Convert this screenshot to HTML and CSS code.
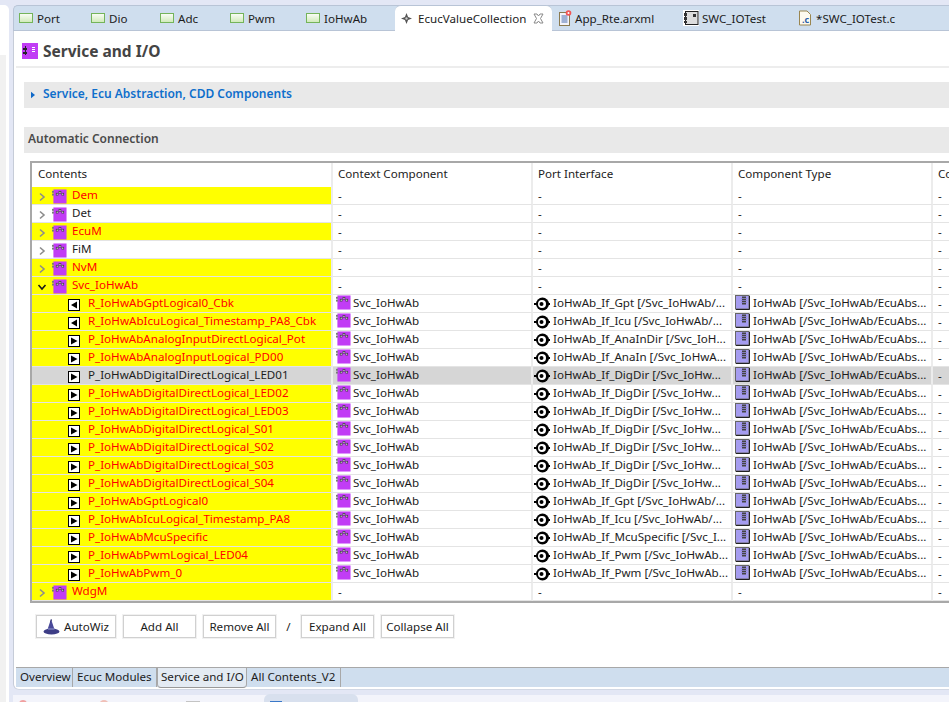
FILE: index.html
```html
<!DOCTYPE html>
<html>
<head>
<meta charset="utf-8">
<title>Service and I/O</title>
<link rel="stylesheet" href="styles.css">
</head>
<body>
<svg class="defs" width="0" height="0">
  <defs>
    <symbol id="comp" viewBox="0 0 16 16">
      <rect x="1.500" y="0.500" width="14" height="15" fill="#c13cf5"/>
      <rect x="0" y="2" width="2" height="2" fill="#777"/><rect x="0" y="5" width="2" height="2" fill="#777"/>
      <rect x="4.500" y="4.500" width="2" height="2" fill="#fff" stroke="#333" stroke-width="0.700"/>
      <rect x="7.500" y="2.500" width="2" height="2" fill="#fff" stroke="#333" stroke-width="0.700"/>
      <rect x="10.500" y="4.500" width="2" height="2" fill="#fff" stroke="#333" stroke-width="0.700"/>
    </symbol>
    <symbol id="portr" viewBox="0 0 12 12">
      <rect x="0.500" y="0.500" width="11" height="11" fill="#fff" stroke="#000"/>
      <path d="M9 2.500V9.500L3 6Z" fill="#000"/>
    </symbol>
    <symbol id="portp" viewBox="0 0 12 12">
      <rect x="0.500" y="0.500" width="11" height="11" fill="#fff" stroke="#000"/>
      <path d="M3 2.500V9.500L9.500 6Z" fill="#000"/>
    </symbol>
    <symbol id="iface" viewBox="0 0 16 14">
      <path d="M0 7H4M13 7H16" stroke="#000" stroke-width="2"/>
      <circle cx="8.500" cy="7" r="6.500" fill="#000"/>
      <circle cx="8" cy="7" r="4" fill="#fff"/>
      <circle cx="7.500" cy="7" r="2" fill="#000"/>
    </symbol>
    <symbol id="ctype" viewBox="0 0 15 15">
      <rect x="0.500" y="0.500" width="13.500" height="13.500" fill="#a59cf0" stroke="#666"/>
      <path d="M14.500 1V14.500H1" fill="none" stroke="#222"/>
      <rect x="7" y="1.500" width="4" height="8" fill="#444"/>
      <path d="M6 3.500H12M6 5.500H12M6 7.500H12" stroke="#8f86d8" stroke-width="0.800"/>
    </symbol>
    <symbol id="chev" viewBox="0 0 8 10">
      <path d="M2 1.500L6 5L2 8.500" fill="none" stroke="#8c8c8c" stroke-width="1.600"/>
    </symbol>
    <symbol id="chevd" viewBox="0 0 10 8">
      <path d="M1.500 2L5 6L8.500 2" fill="none" stroke="#1a1a1a" stroke-width="1.600"/>
    </symbol>
    <symbol id="ed" viewBox="0 0 14 10">
      <defs><linearGradient id="edg" x1="0" y1="0" x2="0" y2="1"><stop offset="0" stop-color="#fbfdf8"/><stop offset="1" stop-color="#cfeab8"/></linearGradient></defs>
      <rect x="0.500" y="0.500" width="13" height="9" fill="url(#edg)" stroke="#74b45a"/>
    </symbol>
  </defs>
</svg>
<div class="window">
  <div class="side"><div class="side-in"></div></div>
  <div class="editor">
    <div class="tabs">
      <div class="tab t-port"><svg class="ti"><use href="#ed"/></svg>Port</div>
      <div class="tab t-dio"><svg class="ti"><use href="#ed"/></svg>Dio</div>
      <div class="tab t-adc"><svg class="ti"><use href="#ed"/></svg>Adc</div>
      <div class="tab t-pwm"><svg class="ti"><use href="#ed"/></svg>Pwm</div>
      <div class="tab t-io"><svg class="ti"><use href="#ed"/></svg>IoHwAb</div>
      <div class="tab active">
        <svg class="star" viewBox="0 0 14 14"><path d="M7 0L9 5L14 7L9 9L7 14L5 9L0 7L5 5Z" fill="#555"/><circle cx="7" cy="7" r="1.500" fill="#ccc"/></svg>
        <span>EcucValueCollection</span>
        <svg class="close" viewBox="0 0 11 11"><path d="M1 1L4 1L5.500 3L7 1L10 1L7.500 5.500L10 10L7 10L5.500 8L4 10L1 10L3.500 5.500Z" fill="#fff" stroke="#8a8a8a"/></svg>
      </div>
      <div class="tab t-rte">
        <svg class="ti2" viewBox="0 0 13 16"><rect x="0.500" y="2.500" width="10" height="13" fill="#f4f4fa" stroke="#8a7a50"/><path d="M2.500 6H8.500M2.500 8H8.500M2.500 10H8.500M2.500 12H8.500" stroke="#4a6fb0"/><circle cx="9.500" cy="3" r="2.800" fill="#f25555"/><circle cx="9.500" cy="3" r="1" fill="#fff"/></svg>
        App_Rte.arxml
      </div>
      <div class="tab t-swc">
        <svg class="ti2" viewBox="0 0 16 16"><rect width="16" height="16" fill="#fff"/><rect x="2.500" y="1.500" width="12.500" height="13" fill="#ddd" stroke="#222"/><rect x="1" y="3" width="3" height="3" fill="#333"/><rect x="1" y="7" width="3" height="3" fill="#333"/><rect x="1" y="11" width="3" height="2" fill="#333"/><rect x="10" y="4" width="3" height="3" fill="#333"/></svg>
        SWC_IOTest
      </div>
      <div class="tab t-c">
        <svg class="ti2" viewBox="0 0 12 15"><path d="M0.500 0.500H8L11.500 4V14.500H0.500Z" fill="#fdfaf0" stroke="#9a8650"/><text x="3" y="12" class="cglyph">.c</text></svg>
        *SWC_IOTest.c
      </div>
    </div>

    <div class="page">
      <header class="head">
        <svg class="hicon" viewBox="0 0 16 16"><rect width="16" height="16" fill="#c13cf5"/><rect x="1" y="5" width="4" height="2" fill="#222"/><rect x="1" y="9" width="4" height="2" fill="#222"/><rect x="3" y="3" width="1" height="9" fill="#222"/><rect x="10" y="4" width="3" height="1" fill="#fff"/><rect x="10" y="6" width="3" height="1" fill="#fff"/><rect x="10" y="8" width="3" height="1" fill="#fff"/></svg>
        <h1>Service and I/O</h1>
      </header>

      <section class="bar bar-service">
        <svg class="tw" viewBox="0 0 5 8"><path d="M0 0L5 4L0 8Z" fill="#1069c8"/></svg>
        <span>Service, Ecu Abstraction, CDD Components</span>
      </section>

      <section class="bar bar-auto"><span>Automatic Connection</span></section>

      <div class="tree">
        <table>
          <colgroup><col class="c1"><col class="c2"><col class="c3"><col class="c4"><col class="c5"></colgroup>
          <thead><tr><th>Contents</th><th>Context Component</th><th>Port Interface</th><th>Component Type</th><th>Co</th></tr></thead>
          <tbody>
            <tr class="mark"><td><div class="cell lvl0"><svg class="chev"><use href="#chev"/></svg><svg class="ic16"><use href="#comp"/></svg><span>Dem</span></div></td><td>-</td><td>-</td><td>-</td><td>-</td></tr>
            <tr><td><div class="cell lvl0"><svg class="chev"><use href="#chev"/></svg><svg class="ic16"><use href="#comp"/></svg><span>Det</span></div></td><td>-</td><td>-</td><td>-</td><td>-</td></tr>
            <tr class="mark"><td><div class="cell lvl0"><svg class="chev"><use href="#chev"/></svg><svg class="ic16"><use href="#comp"/></svg><span>EcuM</span></div></td><td>-</td><td>-</td><td>-</td><td>-</td></tr>
            <tr><td><div class="cell lvl0"><svg class="chev"><use href="#chev"/></svg><svg class="ic16"><use href="#comp"/></svg><span>FiM</span></div></td><td>-</td><td>-</td><td>-</td><td>-</td></tr>
            <tr class="mark"><td><div class="cell lvl0"><svg class="chev"><use href="#chev"/></svg><svg class="ic16"><use href="#comp"/></svg><span>NvM</span></div></td><td>-</td><td>-</td><td>-</td><td>-</td></tr>
            <tr class="mark"><td><div class="cell lvl0"><svg class="chevd"><use href="#chevd"/></svg><svg class="ic16"><use href="#comp"/></svg><span>Svc_IoHwAb</span></div></td><td>-</td><td>-</td><td>-</td><td>-</td></tr>
            <tr class="mark"><td><div class="cell lvl1"><svg class="ic12"><use href="#portr"/></svg><span>R_IoHwAbGptLogical0_Cbk</span></div></td><td><div class="cell ctx"><svg class="icc"><use href="#comp"/></svg><span>Svc_IoHwAb</span></div></td><td><div class="cell pif"><svg class="icif"><use href="#iface"/></svg><span>IoHwAb_If_Gpt [/Svc_IoHwAb/...</span></div></td><td><div class="cell cty"><svg class="icty"><use href="#ctype"/></svg><span>IoHwAb [/Svc_IoHwAb/EcuAbs...</span></div></td><td>-</td></tr>
            <tr class="mark"><td><div class="cell lvl1"><svg class="ic12"><use href="#portr"/></svg><span>R_IoHwAbIcuLogical_Timestamp_PA8_Cbk</span></div></td><td><div class="cell ctx"><svg class="icc"><use href="#comp"/></svg><span>Svc_IoHwAb</span></div></td><td><div class="cell pif"><svg class="icif"><use href="#iface"/></svg><span>IoHwAb_If_Icu [/Svc_IoHwAb/...</span></div></td><td><div class="cell cty"><svg class="icty"><use href="#ctype"/></svg><span>IoHwAb [/Svc_IoHwAb/EcuAbs...</span></div></td><td>-</td></tr>
            <tr class="mark"><td><div class="cell lvl1"><svg class="ic12"><use href="#portp"/></svg><span>P_IoHwAbAnalogInputDirectLogical_Pot</span></div></td><td><div class="cell ctx"><svg class="icc"><use href="#comp"/></svg><span>Svc_IoHwAb</span></div></td><td><div class="cell pif"><svg class="icif"><use href="#iface"/></svg><span>IoHwAb_If_AnaInDir [/Svc_IoH...</span></div></td><td><div class="cell cty"><svg class="icty"><use href="#ctype"/></svg><span>IoHwAb [/Svc_IoHwAb/EcuAbs...</span></div></td><td>-</td></tr>
            <tr class="mark"><td><div class="cell lvl1"><svg class="ic12"><use href="#portp"/></svg><span>P_IoHwAbAnalogInputLogical_PD00</span></div></td><td><div class="cell ctx"><svg class="icc"><use href="#comp"/></svg><span>Svc_IoHwAb</span></div></td><td><div class="cell pif"><svg class="icif"><use href="#iface"/></svg><span>IoHwAb_If_AnaIn [/Svc_IoHwA...</span></div></td><td><div class="cell cty"><svg class="icty"><use href="#ctype"/></svg><span>IoHwAb [/Svc_IoHwAb/EcuAbs...</span></div></td><td>-</td></tr>
            <tr class="selrow"><td><div class="cell lvl1"><svg class="ic12"><use href="#portp"/></svg><span>P_IoHwAbDigitalDirectLogical_LED01</span></div></td><td><div class="cell ctx"><svg class="icc"><use href="#comp"/></svg><span>Svc_IoHwAb</span></div></td><td><div class="cell pif"><svg class="icif"><use href="#iface"/></svg><span>IoHwAb_If_DigDir [/Svc_IoHw...</span></div></td><td><div class="cell cty"><svg class="icty"><use href="#ctype"/></svg><span>IoHwAb [/Svc_IoHwAb/EcuAbs...</span></div></td><td>-</td></tr>
            <tr class="mark"><td><div class="cell lvl1"><svg class="ic12"><use href="#portp"/></svg><span>P_IoHwAbDigitalDirectLogical_LED02</span></div></td><td><div class="cell ctx"><svg class="icc"><use href="#comp"/></svg><span>Svc_IoHwAb</span></div></td><td><div class="cell pif"><svg class="icif"><use href="#iface"/></svg><span>IoHwAb_If_DigDir [/Svc_IoHw...</span></div></td><td><div class="cell cty"><svg class="icty"><use href="#ctype"/></svg><span>IoHwAb [/Svc_IoHwAb/EcuAbs...</span></div></td><td>-</td></tr>
            <tr class="mark"><td><div class="cell lvl1"><svg class="ic12"><use href="#portp"/></svg><span>P_IoHwAbDigitalDirectLogical_LED03</span></div></td><td><div class="cell ctx"><svg class="icc"><use href="#comp"/></svg><span>Svc_IoHwAb</span></div></td><td><div class="cell pif"><svg class="icif"><use href="#iface"/></svg><span>IoHwAb_If_DigDir [/Svc_IoHw...</span></div></td><td><div class="cell cty"><svg class="icty"><use href="#ctype"/></svg><span>IoHwAb [/Svc_IoHwAb/EcuAbs...</span></div></td><td>-</td></tr>
            <tr class="mark"><td><div class="cell lvl1"><svg class="ic12"><use href="#portp"/></svg><span>P_IoHwAbDigitalDirectLogical_S01</span></div></td><td><div class="cell ctx"><svg class="icc"><use href="#comp"/></svg><span>Svc_IoHwAb</span></div></td><td><div class="cell pif"><svg class="icif"><use href="#iface"/></svg><span>IoHwAb_If_DigDir [/Svc_IoHw...</span></div></td><td><div class="cell cty"><svg class="icty"><use href="#ctype"/></svg><span>IoHwAb [/Svc_IoHwAb/EcuAbs...</span></div></td><td>-</td></tr>
            <tr class="mark"><td><div class="cell lvl1"><svg class="ic12"><use href="#portp"/></svg><span>P_IoHwAbDigitalDirectLogical_S02</span></div></td><td><div class="cell ctx"><svg class="icc"><use href="#comp"/></svg><span>Svc_IoHwAb</span></div></td><td><div class="cell pif"><svg class="icif"><use href="#iface"/></svg><span>IoHwAb_If_DigDir [/Svc_IoHw...</span></div></td><td><div class="cell cty"><svg class="icty"><use href="#ctype"/></svg><span>IoHwAb [/Svc_IoHwAb/EcuAbs...</span></div></td><td>-</td></tr>
            <tr class="mark"><td><div class="cell lvl1"><svg class="ic12"><use href="#portp"/></svg><span>P_IoHwAbDigitalDirectLogical_S03</span></div></td><td><div class="cell ctx"><svg class="icc"><use href="#comp"/></svg><span>Svc_IoHwAb</span></div></td><td><div class="cell pif"><svg class="icif"><use href="#iface"/></svg><span>IoHwAb_If_DigDir [/Svc_IoHw...</span></div></td><td><div class="cell cty"><svg class="icty"><use href="#ctype"/></svg><span>IoHwAb [/Svc_IoHwAb/EcuAbs...</span></div></td><td>-</td></tr>
            <tr class="mark"><td><div class="cell lvl1"><svg class="ic12"><use href="#portp"/></svg><span>P_IoHwAbDigitalDirectLogical_S04</span></div></td><td><div class="cell ctx"><svg class="icc"><use href="#comp"/></svg><span>Svc_IoHwAb</span></div></td><td><div class="cell pif"><svg class="icif"><use href="#iface"/></svg><span>IoHwAb_If_DigDir [/Svc_IoHw...</span></div></td><td><div class="cell cty"><svg class="icty"><use href="#ctype"/></svg><span>IoHwAb [/Svc_IoHwAb/EcuAbs...</span></div></td><td>-</td></tr>
            <tr class="mark"><td><div class="cell lvl1"><svg class="ic12"><use href="#portp"/></svg><span>P_IoHwAbGptLogical0</span></div></td><td><div class="cell ctx"><svg class="icc"><use href="#comp"/></svg><span>Svc_IoHwAb</span></div></td><td><div class="cell pif"><svg class="icif"><use href="#iface"/></svg><span>IoHwAb_If_Gpt [/Svc_IoHwAb/...</span></div></td><td><div class="cell cty"><svg class="icty"><use href="#ctype"/></svg><span>IoHwAb [/Svc_IoHwAb/EcuAbs...</span></div></td><td>-</td></tr>
            <tr class="mark"><td><div class="cell lvl1"><svg class="ic12"><use href="#portp"/></svg><span>P_IoHwAbIcuLogical_Timestamp_PA8</span></div></td><td><div class="cell ctx"><svg class="icc"><use href="#comp"/></svg><span>Svc_IoHwAb</span></div></td><td><div class="cell pif"><svg class="icif"><use href="#iface"/></svg><span>IoHwAb_If_Icu [/Svc_IoHwAb/...</span></div></td><td><div class="cell cty"><svg class="icty"><use href="#ctype"/></svg><span>IoHwAb [/Svc_IoHwAb/EcuAbs...</span></div></td><td>-</td></tr>
            <tr class="mark"><td><div class="cell lvl1"><svg class="ic12"><use href="#portp"/></svg><span>P_IoHwAbMcuSpecific</span></div></td><td><div class="cell ctx"><svg class="icc"><use href="#comp"/></svg><span>Svc_IoHwAb</span></div></td><td><div class="cell pif"><svg class="icif"><use href="#iface"/></svg><span>IoHwAb_If_McuSpecific [/Svc_I...</span></div></td><td><div class="cell cty"><svg class="icty"><use href="#ctype"/></svg><span>IoHwAb [/Svc_IoHwAb/EcuAbs...</span></div></td><td>-</td></tr>
            <tr class="mark"><td><div class="cell lvl1"><svg class="ic12"><use href="#portp"/></svg><span>P_IoHwAbPwmLogical_LED04</span></div></td><td><div class="cell ctx"><svg class="icc"><use href="#comp"/></svg><span>Svc_IoHwAb</span></div></td><td><div class="cell pif"><svg class="icif"><use href="#iface"/></svg><span>IoHwAb_If_Pwm [/Svc_IoHwAb...</span></div></td><td><div class="cell cty"><svg class="icty"><use href="#ctype"/></svg><span>IoHwAb [/Svc_IoHwAb/EcuAbs...</span></div></td><td>-</td></tr>
            <tr class="mark"><td><div class="cell lvl1"><svg class="ic12"><use href="#portp"/></svg><span>P_IoHwAbPwm_0</span></div></td><td><div class="cell ctx"><svg class="icc"><use href="#comp"/></svg><span>Svc_IoHwAb</span></div></td><td><div class="cell pif"><svg class="icif"><use href="#iface"/></svg><span>IoHwAb_If_Pwm [/Svc_IoHwAb...</span></div></td><td><div class="cell cty"><svg class="icty"><use href="#ctype"/></svg><span>IoHwAb [/Svc_IoHwAb/EcuAbs...</span></div></td><td>-</td></tr>
            <tr class="mark"><td><div class="cell lvl0"><svg class="chev"><use href="#chev"/></svg><svg class="ic16"><use href="#comp"/></svg><span>WdgM</span></div></td><td>-</td><td>-</td><td>-</td><td>-</td></tr>
          </tbody>
        </table>
      </div>

      <div class="actions">
        <button class="btn b-wiz"><svg class="wiz" viewBox="0 0 18 16"><path d="M8 0L12 12H4Z" fill="#4a4a9a"/><path d="M8 0L9 1L7 4Z" fill="#2b2b66"/><ellipse cx="8.500" cy="12.500" rx="8" ry="3" fill="#3d3d86"/><path d="M5 10L11.500 10" stroke="#9aa0d8"/></svg>AutoWiz</button>
        <button class="btn b-add">Add All</button>
        <button class="btn b-rem">Remove All</button>
        <span class="slash">/</span>
        <button class="btn b-exp">Expand All</button>
        <button class="btn b-col">Collapse All</button>
      </div>

      <div class="grow"></div>

      <nav class="pagetabs">
        <div class="pt pt1">Overview</div>
        <div class="pt pt2">Ecuc Modules</div>
        <div class="pt pt3">Service and I/O</div>
        <div class="pt pt4">All Contents_V2</div>
      </nav>
    </div>
    <div class="bottom">
      <span class="bi bi-red"></span>
      <span class="bi bi-pink"></span>
      <span class="bi bi-gray"></span>
      <div class="stub"><span class="bi bi-blue"></span></div>
    </div>
  </div>
</div>
</body>
</html>
```

FILE: styles.css
```css
* { box-sizing: border-box; }
html, body { margin: 0; height: 100%; overflow: hidden; }
body { background: #e3e7f5; font-family: "Noto Sans", "Noto Sans CJK KR", sans-serif; font-size: 11.6px; color: #1c1c1c; }
.defs { position: absolute; }
.window { display: flex; width: 949px; height: 702px; overflow: hidden; }
.side { width: 9px; flex: none; margin-top: 5px; background: #fff; border-top-right-radius: 5px; padding-top: 50px; }
.side-in { width: 6px; height: 100%; background: #f1f1f1; }
.editor { margin-left: 4px; flex: 1; min-width: 0; display: flex; flex-direction: column; padding-top: 5px; }

.tabs { display: flex; height: 26px; background: #cfdeee; border: 1px solid #b8c4d6; border-right: 0; border-radius: 5px 0 0 0; flex: none; align-items: center; }
.tab { display: flex; align-items: center; height: 24px; white-space: nowrap; flex: none; }
.ti { width: 14px; height: 10px; margin-right: 4px; flex: none; }
.ti2 { width: 13px; height: 16px; margin-right: 3px; flex: none; }
.t-port { width: 77px; padding-left: 5px; }
.t-dio { width: 69px; }
.t-adc { width: 70px; }
.t-pwm { width: 76px; }
.t-io { width: 89px; }
.active { width: 157px; background: #fff; height: 26px; margin: -1px 0; padding-left: 6px; border-radius: 6px 6px 0 0; border-top: 1px solid #b8c4d6; }
.star { width: 11px; height: 11px; margin-right: 6px; flex: none; }
.close { width: 11px; height: 11px; margin-left: 7px; flex: none; }
.t-rte { width: 131px; padding-left: 7px; }
.t-swc { width: 116px; }
.t-swc .ti2 { width: 16px; margin-right: 3px; }
.t-c { width: 150px; }
.t-c .ti2 { width: 12px; margin-right: 5px; }
.cglyph { font-size: 9px; font-weight: 700; fill: #2a5ea8; }

.page { flex: 1; min-height: 0; background: #fff; border-left: 1px solid #c6ccd8; display: flex; flex-direction: column; padding: 0 0 2px 2px; border-radius: 0 0 0 6px; border-bottom: 1px solid #d2d8e4; }
.head { display: flex; align-items: center; flex: none; border-bottom: 2px solid #ededed; padding: 4px 0 0 6px; height: 37px; }
.hicon { width: 16px; height: 16px; margin-right: 5px; flex: none; }
h1 { margin: 0; font-size: 15.5px; font-weight: 700; color: #444; line-height: 20px; }
.bar { background: #e9e9e9; flex: none; display: flex; align-items: center; margin-left: 8px; height: 26px; font-size: 12px; font-weight: 600; }
.bar-service { margin-top: 14px; padding: 0 0 4px 7px; color: #0f6fcc; }
.tw { width: 4px; height: 8px; margin: 3px 8px 0 0; }
.bar-auto { margin-top: 19px; padding: 0 0 4px 4px; color: #4a4a4a; }

.tree { margin: 8px 0 0 14px; flex: none; height: 442px; border: 2px solid #a8a8a8; border-right: 0; overflow: hidden; }
table { border-collapse: separate; border-spacing: 0; table-layout: fixed; width: 1011px; }
.c1 { width: 301px; } .c2 { width: 200px; } .c3 { width: 200px; } .c4 { width: 200px; } .c5 { width: 110px; }
th { height: 24px; font-weight: 400; text-align: left; padding: 0 0 4px 5px; border-right: 2px solid #ececec; color: #222; white-space: nowrap; }
th:first-child { padding-left: 6px; }
td { height: 18px; padding: 0 0 0 5px; border-right: 2px solid #ececec; border-bottom: 1px solid #e4e4e4; white-space: nowrap; overflow: hidden; line-height: 17px; }
td:first-child { padding: 0; }
tr.mark td:first-child { background: #ffff00; color: #ff0000; }
tr.selrow td { background: #d6d6d6; }
.cell { display: flex; align-items: center; height: 17px; }
.cell span { margin-bottom: 2px; }
.lvl0 { padding-left: 6px; }
.lvl1 { padding-left: 36px; }
.ctx { margin-left: -2px; }
.pif { margin-left: -4px; }
.cty { margin-left: -3px; }
.chev { width: 8px; height: 10px; margin: 3px 6px 0 0; flex: none; }
.chevd { width: 10px; height: 8px; margin: 3px 5px 0 -1px; flex: none; }
.ic16 { width: 15px; height: 15px; flex: none; margin: 1px 5px 0 0; }
.ic12 { width: 12px; height: 12px; flex: none; margin: 3px 8px 0 0; }
.icc { width: 15px; height: 15px; flex: none; margin: -2px 2px 0 0; }
.icif { width: 16px; height: 14px; flex: none; margin-right: 3px; }
.icty { width: 15px; height: 15px; flex: none; margin: -2px 3px 0 0; }

.actions { display: flex; align-items: center; margin: 12px 0 0 20px; flex: none; }
.btn { height: 23px; padding: 0; font: inherit; color: #1c1c1c; background: #fff; border: 1px solid #d0d0d0; box-shadow: 0 0 0 1px #f1f1f1; display: flex; align-items: center; justify-content: center; margin-right: 7px; }
.b-wiz { width: 80px; margin-right: 7px; }
.wiz { width: 18px; height: 16px; margin-right: 3px; flex: none; }
.b-add { width: 73px; }
.b-rem { width: 73px; margin-right: 0; }
.slash { width: 25px; text-align: center; }
.b-exp { width: 73px; }
.b-col { width: 73px; }
.grow { flex: 1; }
.pagetabs { display: flex; height: 20px; background: #cfdeee; border-top: 1px solid #a8a8a8; flex: none; }
.pt { border-right: 1px solid #a8a8a8; padding-left: 4px; line-height: 18px; white-space: nowrap; }
.pt1 { width: 57px; }
.pt2 { width: 84px; }
.pt3 { width: 90px; background: #e4ebf3; height: 20px; margin-bottom: -1px; border-bottom: 1px solid #999; border-left: 1px solid #a8a8a8; border-radius: 0 0 4px 4px; padding-left: 3px; }
.pt4 { width: 94px; }
.bottom { height: 12px; flex: none; padding-top: 4px; display: flex; overflow: hidden; position: relative; }
.bottom::before { content: ""; position: absolute; left: 0; right: 0; top: 5px; bottom: 0; background: #f3f4fb; }
.bi { display: block; width: 8px; height: 8px; border-radius: 50%; position: relative; flex: none; }
.bi-red { background: #f0a0a0; margin: 6px 0 0 6px; }
.bi-pink { background: #f0c0b8; margin: 6px 0 0 72px; width: 10px; height: 10px; }
.bi-gray { background: #c4c4c4; margin: 7px 0 0 77px; border-radius: 0; width: 14px; }
.stub { width: 94px; height: 8px; margin-left: 64px; background: #d8e0ee; border-radius: 6px 6px 0 0; position: relative; padding: 7px 0 0 6px; }
.bi-blue { background: #3a78c8; border-radius: 0; width: 12px; }
```
